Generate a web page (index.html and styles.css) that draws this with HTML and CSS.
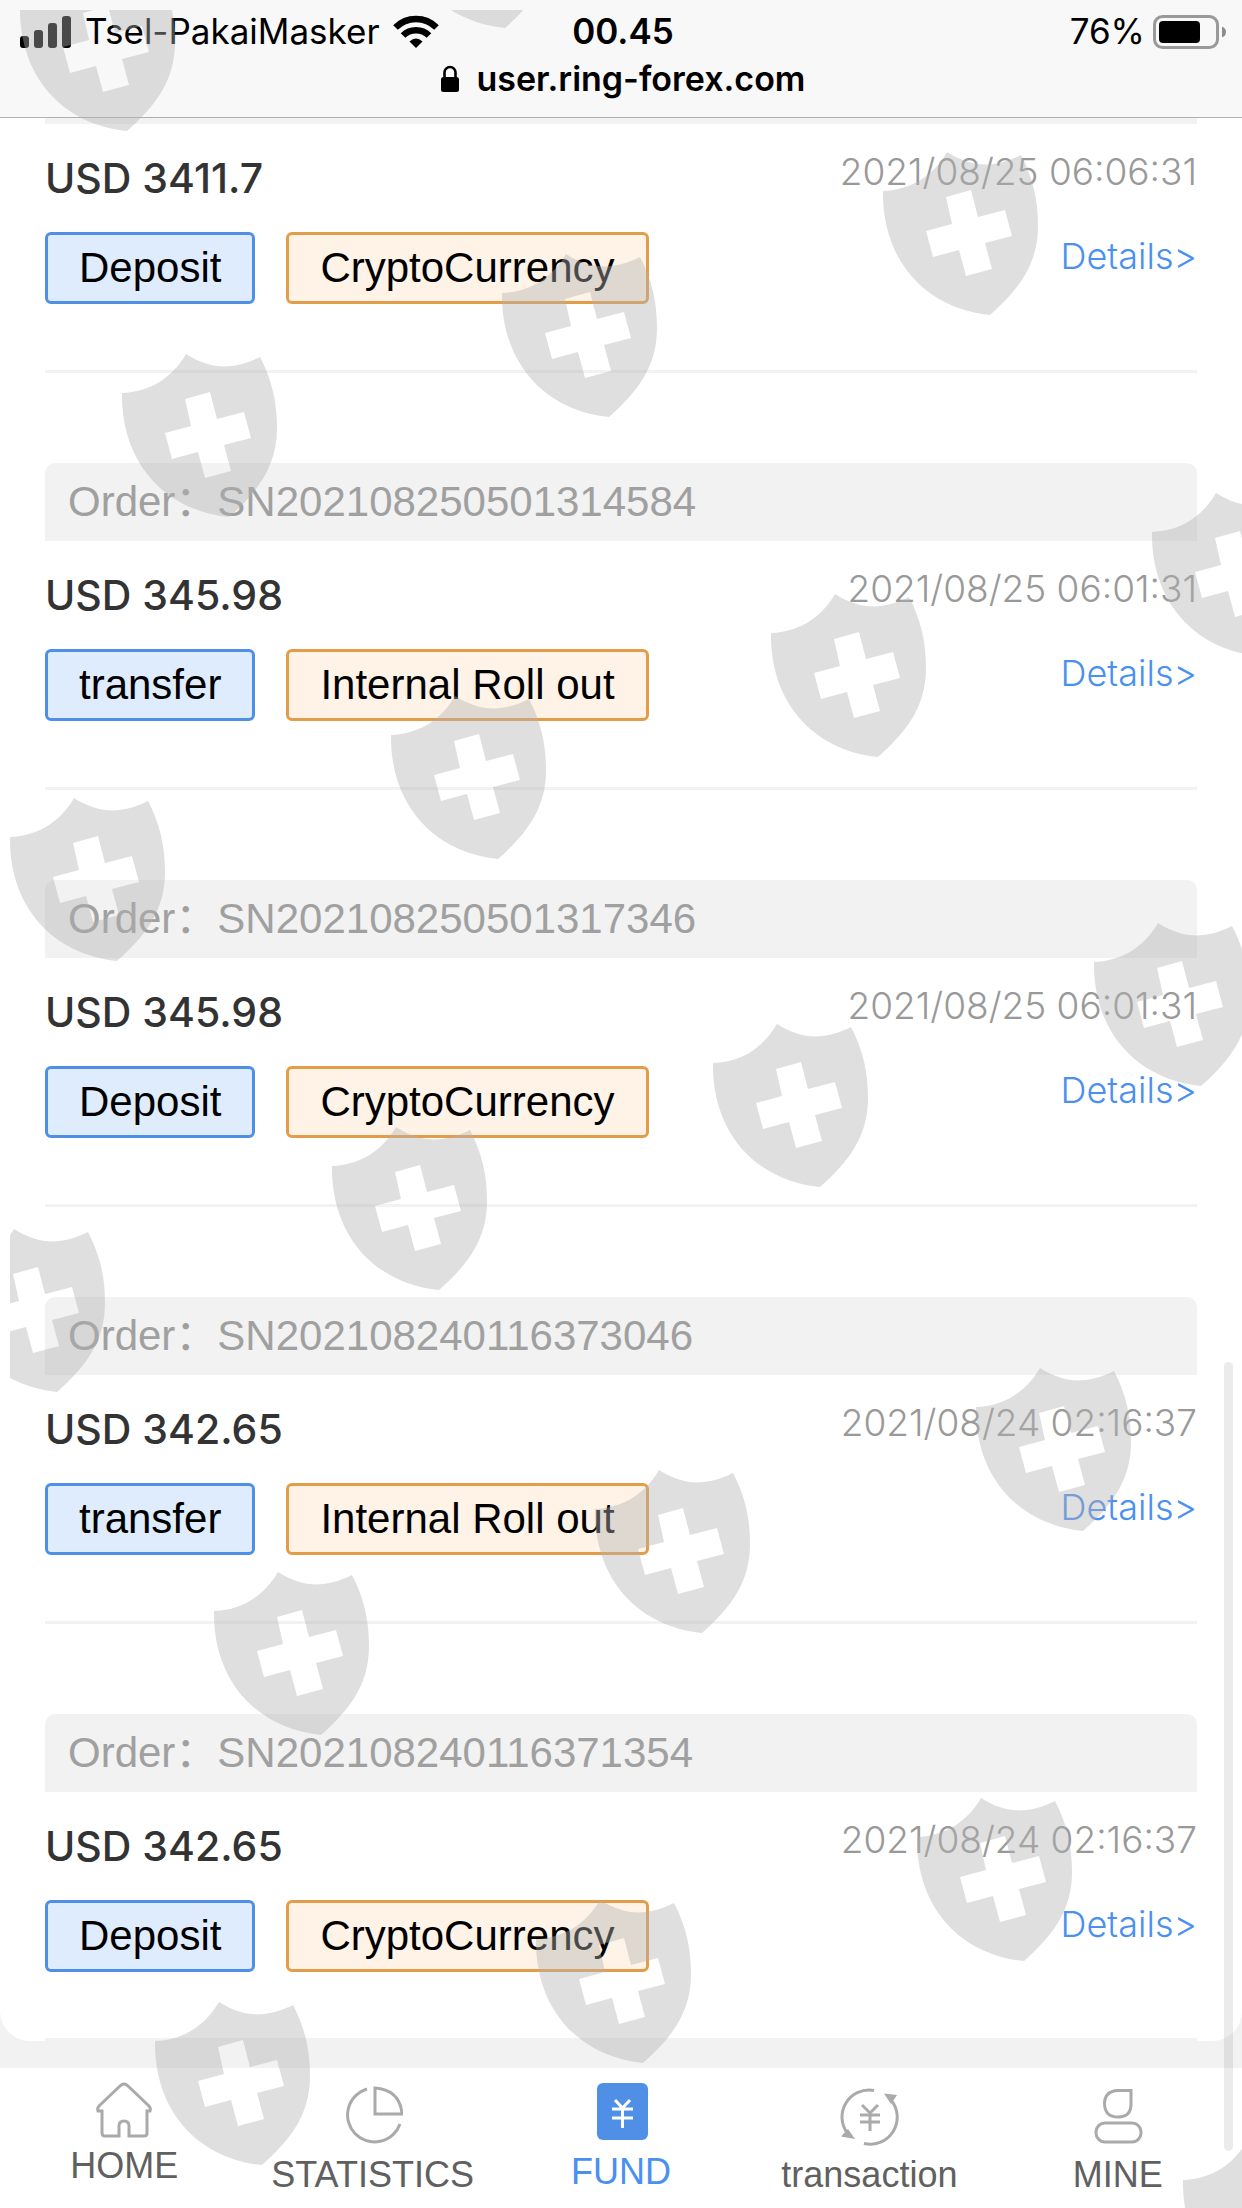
FILE: index.html
```html
<!DOCTYPE html>
<html lang="en">
<head>
<meta charset="utf-8">
<meta name="viewport" content="width=device-width, initial-scale=1">
<title>Fund records</title>
<link rel="stylesheet" href="styles.css">
</head>
<body>
<div class="page">
  <header class="browser-bar">
    <div class="status">
      <div class="status-left">
        <svg class="signal" width="52" height="34" viewBox="0 0 52 34" aria-hidden="true"><rect x="0" y="21" width="9" height="12" rx="3"/><rect x="14" y="15" width="9" height="18" rx="3"/><rect x="28" y="8" width="9" height="25" rx="3"/><rect x="42" y="1" width="9" height="32" rx="3"/></svg>
        <span>Tsel-PakaiMasker</span>
        <svg width="46" height="34" viewBox="0 0 46 34" aria-hidden="true"><g fill="none" stroke="#000" stroke-width="6.500"><path d="M2.500 12.500A29 29 0 0 1 43.500 12.500"/><path d="M10 20.500A18.500 18.500 0 0 1 36 20.500"/></g><path d="M16.500 26.500Q23 20.500 29.500 26.500L23 33Z"/></svg>
      </div>
      <time class="clock">00.45</time>
      <div class="status-right">
        <span>76%</span>
        <svg width="76" height="34" viewBox="0 0 76 34" aria-hidden="true"><rect x="1.500" y="1.500" width="63" height="31" rx="8" fill="none" stroke="#999" stroke-width="3"/><rect x="6" y="6" width="41" height="22" rx="4"/><path d="M69 11.500Q73 13 73 17T69 22.500Z" fill="#8e8e8e"/></svg>
      </div>
    </div>
    <div class="address">
      <svg width="18" height="28" viewBox="0 0 18 28" aria-hidden="true"><rect x="0" y="12" width="18" height="15" rx="2.500"/><path d="M3.500 13V7.500a5.500 5.500 0 0 1 11 0V13" fill="none" stroke="#000" stroke-width="2.600"/></svg>
      <span>user.ring-forex.com</span>
    </div>
  </header>

  <main class="content">
    <div class="card">
      <article class="record record-first">
        <div class="order order-tail"></div>
        <div class="body">
          <div class="left"><div class="amount">USD 3411.7</div><div class="tags"><span class="tag kind">Deposit</span><span class="tag method">CryptoCurrency</span></div></div>
          <div class="right"><time>2021/08/25 06:06:31</time><a href="#">Details&gt;</a></div>
        </div>
      </article>
      <article class="record">
        <div class="order">Order&#xFF1A;SN202108250501314584</div>
        <div class="body">
          <div class="left"><div class="amount">USD 345.98</div><div class="tags"><span class="tag kind">transfer</span><span class="tag method">Internal Roll out</span></div></div>
          <div class="right"><time>2021/08/25 06:01:31</time><a href="#">Details&gt;</a></div>
        </div>
      </article>
      <article class="record">
        <div class="order">Order&#xFF1A;SN202108250501317346</div>
        <div class="body">
          <div class="left"><div class="amount">USD 345.98</div><div class="tags"><span class="tag kind">Deposit</span><span class="tag method">CryptoCurrency</span></div></div>
          <div class="right"><time>2021/08/25 06:01:31</time><a href="#">Details&gt;</a></div>
        </div>
      </article>
      <article class="record">
        <div class="order">Order&#xFF1A;SN202108240116373046</div>
        <div class="body">
          <div class="left"><div class="amount">USD 342.65</div><div class="tags"><span class="tag kind">transfer</span><span class="tag method">Internal Roll out</span></div></div>
          <div class="right"><time>2021/08/24 02:16:37</time><a href="#">Details&gt;</a></div>
        </div>
      </article>
      <article class="record">
        <div class="order">Order&#xFF1A;SN202108240116371354</div>
        <div class="body">
          <div class="left"><div class="amount">USD 342.65</div><div class="tags"><span class="tag kind">Deposit</span><span class="tag method">CryptoCurrency</span></div></div>
          <div class="right"><time>2021/08/24 02:16:37</time><a href="#">Details&gt;</a></div>
        </div>
      </article>
    </div>
  </main>

  <nav class="tabs">
    <a href="#"><svg width="60" height="60" viewBox="0 0 60 60" aria-hidden="true"><path d="M30 4Q32 4 34 6L55 26Q57 28 56 31H53V53Q53 56 50 56H35V46Q35 41 30 41T25 46V56H11Q8 56 8 53V31H4Q3 28 5 26L26 6Q28 4 30 4Z"/></svg>HOME</a>
    <a href="#"><svg width="60" height="69" viewBox="0 0 60 69" aria-hidden="true"><path d="M24 9A27 27 0 1 0 57 44M32 8V34H59Q57 10 32 8Z"/></svg>STATISTICS</a>
    <a href="#" class="active"><svg width="60" height="66" viewBox="0 0 60 66" aria-hidden="true"><rect x="6" y="3" width="51" height="57" rx="6" fill="#4f90e6" stroke="none"/><path d="M24 20L31.500 28L39 20M21 29H42M21 38H42M31.500 28V48" stroke="#fff"/></svg>FUND</a>
    <a href="#"><svg width="60" height="69" viewBox="0 0 60 69" aria-hidden="true"><path d="M35 10.500A27 27 0 0 0 9 54M25 63.500A27 27 0 0 0 52 20M23 25L31 33L39 25M21 35H41M21 42H41M31 33V51"/><path d="M45 13.500L58 15L52 24ZM2 56.500L9 49L16 59Z" fill="#aaa" stroke="none"/></svg>transaction</a>
    <a href="#"><svg width="60" height="69" viewBox="0 0 60 69" aria-hidden="true"><path d="M43 10.500H30Q16.500 11 16.500 24Q17 37 30 37T43 24Z"/><rect x="8" y="43" width="45" height="19" rx="9"/></svg>MINE</a>
  </nav>

  <div class="scroll-thumb"></div>
  <svg class="watermark" aria-hidden="true">
    <defs><path id="shield" fill-rule="evenodd" d="M0 0C28-1 50-15 64-39C89-23 112-23 138-36C150-13 155 9 155 35C155 75 134 100 107 124C40 117-1 67 0 0ZM63 6L69 33L43 40L50 66L76 59L83 85L109 78L102 52L129 45L122 19L95 26L88-1Z"/></defs>
    <use href="#shield" x="10" y="-3"/><use href="#shield" x="388" y="-106"/>
    <use href="#shield" x="873" y="181"/><use href="#shield" x="492" y="283"/><use href="#shield" x="112" y="383"/>
    <use href="#shield" x="1142" y="522"/><use href="#shield" x="761" y="623"/><use href="#shield" x="381" y="725"/><use href="#shield" x="0" y="827"/>
    <use href="#shield" x="1084" y="952"/><use href="#shield" x="703" y="1053"/><use href="#shield" x="322" y="1156"/><use href="#shield" x="-60" y="1258"/>
    <use href="#shield" x="966" y="1397"/><use href="#shield" x="585" y="1499"/><use href="#shield" x="204" y="1601"/>
    <use href="#shield" x="907" y="1827"/><use href="#shield" x="526" y="1929"/><use href="#shield" x="145" y="2031"/>
    <use href="#shield" x="1173" y="2170"/>
  </svg>
</div>
</body>
</html>
```
FILE: styles.css
```css
* { box-sizing: border-box; }

body {
  margin: 0;
  background: #fff;
  font-family: "Liberation Sans", "Noto Sans CJK SC", sans-serif;
  font-size: 42px;
  color: #000;
}

a { text-decoration: none; color: inherit; }
svg { display: block; flex: none; }

.page {
  position: relative;
  min-height: 100vh;
  display: flex;
  flex-direction: column;
  overflow: hidden;
}

/* browser chrome */
.browser-bar {
  padding: 8px 16px 15px 20px;
  background: #f8f8f8;
  border-bottom: 1px solid #b0b0b0;
  font-family: Inter, "Liberation Sans", sans-serif;
  line-height: 47px;
}
.status {
  display: grid;
  grid-template-columns: 1fr auto 1fr;
  align-items: center;
  font-size: 35px;
}
.status-left, .status-right { display: flex; align-items: center; }
.status-left { gap: 13px; }
.status-right { justify-content: flex-end; gap: 8px; }
.status-right svg { margin-right: -3px; }
.clock { font-weight: 600; }
.address {
  display: flex;
  justify-content: center;
  align-items: center;
  gap: 18px;
  font-size: 34px;
  font-weight: 600;
}

/* record list */
.content {
  flex: 1;
  padding-bottom: 26px;
  background: #f2f2f2;
}
.card {
  padding: 0 45px;
  background: #fff;
  border-radius: 0 0 30px 30px;
}
.record {
  padding-top: 90px;
  border-bottom: 3px solid #f2f2f2;
}
.record-first { padding-top: 0; }
.order {
  height: 78px;
  padding: 0 23px;
  background: #f2f2f2;
  border-radius: 10px 10px 0 0;
  color: #a0a0a0;
  line-height: 78px;
}
.order-tail { height: 6px; border-radius: 0; }
.body {
  display: flex;
  justify-content: space-between;
  padding-bottom: 66px;
}
.amount {
  padding: 30px 0;
  font-family: Inter, "Liberation Sans", sans-serif;
  font-size: 41px;
  font-weight: 500;
  line-height: 48px;
  color: #333;
}
.tags { display: flex; gap: 31px; }
.tag {
  padding: 0 31px;
  border: 3px solid;
  border-radius: 6px;
  line-height: 66px;
}
.kind { background: #dfecfe; border-color: #4f90e6; }
.method { background: #fef3e6; border-color: #e39c48; }
.right {
  display: flex;
  flex-direction: column;
  align-items: flex-end;
  gap: 36px;
  padding-top: 24px;
  font-family: Inter, "Liberation Sans", sans-serif;
  font-size: 36px;
  font-weight: 300;
  line-height: 48px;
  color: #999;
}
.right time { font-size: 37px; }
.right a { color: #4a90f0; }

/* bottom tabs */
.tabs {
  display: grid;
  grid-template-columns: repeat(5, 1fr);
  padding: 12px 0;
  background: #fff;
  font-size: 36px;
  line-height: 42px;
  color: #606060;
}
.tabs a {
  display: flex;
  flex-direction: column;
  align-items: center;
  gap: 5px;
}
.tabs svg { fill: none; stroke: #aaa; stroke-width: 3px; }
.tabs .active { color: #4a90f0; }

/* overlays */
.scroll-thumb {
  position: absolute;
  right: 9px;
  bottom: 57px;
  width: 9px;
  height: 789px;
  border-radius: 5px;
  background: rgba(0, 0, 0, 0.08);
}
.watermark {
  position: absolute;
  top: 10px;
  left: 10px;
  width: 100%;
  height: 100%;
  fill: #b2b2b2;
  opacity: 0.41;
  pointer-events: none;
}
```
